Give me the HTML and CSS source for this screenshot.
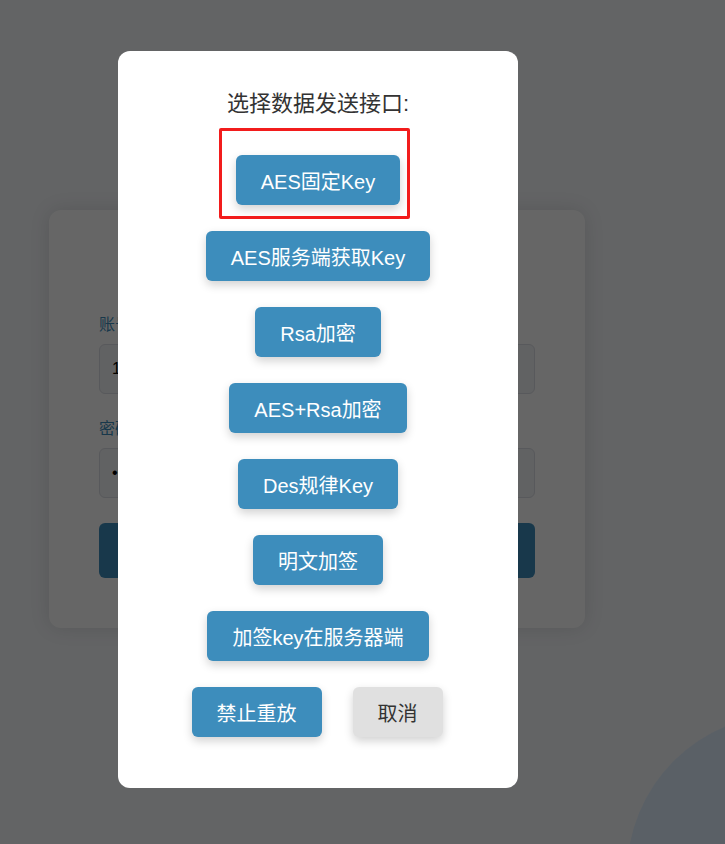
FILE: index.html
```html
<!DOCTYPE html>
<html lang="zh-CN">
<head>
<meta charset="utf-8">
<title>登录</title>
<link rel="stylesheet" href="styles.css">
</head>
<body>
<div class="page">
  <div class="blob"></div>
  <div class="card">
    <div class="card-title"></div>
    <label class="field-label">账号</label>
    <input class="field-input" type="text" value="1">
    <label class="field-label second">密码</label>
    <input class="field-input" type="password" value="123456">
    <button class="login-btn" aria-label="登录"></button>
  </div>
</div>

<div class="overlay">
  <div class="modal">
    <div class="modal-title">选择数据发送接口:</div>
    <div class="btn-list">
      <button class="btn">AES固定Key</button>
      <button class="btn">AES服务端获取Key</button>
      <button class="btn">Rsa加密</button>
      <button class="btn">AES+Rsa加密</button>
      <button class="btn">Des规律Key</button>
      <button class="btn">明文加签</button>
      <button class="btn">加签key在服务器端</button>
      <div class="btn-row">
        <button class="btn">禁止重放</button>
        <button class="btn btn-cancel">取消</button>
      </div>
    </div>
    <div class="annotation"></div>
  </div>
</div>
</body>
</html>
```

FILE: styles.css
```css
* {
  box-sizing: border-box;
}

html, body {
  margin: 0;
  padding: 0;
  height: 100%;
}

body {
  font-family: "Liberation Sans", "Noto Sans CJK SC", sans-serif;
  background: #f7f9fc;
  overflow: hidden;
}

.page {
  position: relative;
  width: 634px;
  min-height: 100vh;
  display: flex;
  justify-content: center;
  align-items: flex-start;
  padding-top: 210px;
}

.blob {
  position: fixed;
  width: 320px;
  height: 320px;
  border-radius: 50%;
  background: #e1f0ff;
  left: 627px;
  top: 714px;
}

.card {
  width: 536px;
  background: #ffffff;
  border-radius: 12px;
  box-shadow: 0 0 20px rgba(0, 0, 0, 0.12);
  padding: 40px 50px 50px;
  display: flex;
  flex-direction: column;
}

.card-title {
  height: 40px;
  margin-bottom: 24px;
}

.field-label {
  font-size: 16px;
  line-height: 22px;
  color: #3d8dbc;
  margin-bottom: 8px;
}

.field-label.second {
  margin-top: 24px;
}

.field-input {
  height: 50px;
  border: 1px solid #dcdfe6;
  border-radius: 6px;
  background: #f2f4f7;
  padding: 0 12px;
  font-size: 16px;
  font-family: inherit;
  color: #000;
}

.login-btn {
  margin-top: 25px;
  height: 55px;
  border: none;
  border-radius: 6px;
  background: #3d8dbc;
}

.overlay {
  position: fixed;
  inset: 0;
  background: rgba(0, 0, 0, 0.6);
  display: flex;
  justify-content: center;
  align-items: flex-start;
  padding-top: 51px;
  padding-right: 89px;
}

.modal {
  position: relative;
  width: 400px;
  height: 737px;
  background: #ffffff;
  border-radius: 12px;
  padding-top: 40px;
  display: flex;
  flex-direction: column;
  align-items: center;
}

.modal-title {
  font-size: 22px;
  line-height: 26px;
  color: #333333;
}

.btn-list {
  margin-top: 38px;
  display: flex;
  flex-direction: column;
  align-items: center;
  gap: 26px;
}

.btn {
  height: 50px;
  padding: 0 25px;
  border: none;
  border-radius: 6px;
  background: #3d8dbc;
  color: #ffffff;
  font-size: 20px;
  font-family: "Liberation Sans", "Noto Sans CJK SC", sans-serif;
  box-shadow: 0 4px 10px rgba(0, 0, 0, 0.18);
  cursor: pointer;
  white-space: nowrap;
}

.btn-row {
  display: flex;
  gap: 31px;
  margin-right: 2px;
}

.btn-cancel {
  background: #e0e0e0;
  color: #333333;
}

.annotation {
  position: absolute;
  left: 101px;
  top: 77px;
  width: 191px;
  height: 91px;
  border: 3px solid #f21c1c;
  border-radius: 2px;
  pointer-events: none;
}
```
